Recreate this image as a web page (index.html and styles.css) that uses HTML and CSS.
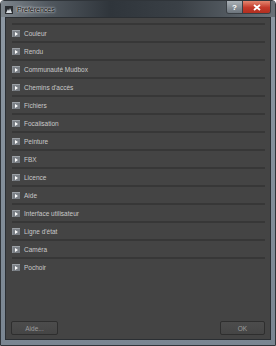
FILE: index.html
```html
<!DOCTYPE html>
<html lang="fr">
<head>
  <meta charset="UTF-8" />
  <title>Préférences</title>
  <link rel="stylesheet" href="styles.css">
</head>
<body>
  <div class="window">
    <div class="titlebar">
      <svg class="app-icon" width="8" height="8" viewBox="0 0 8 8">
        <rect x="0" y="0" width="8" height="8" fill="#2a2d31" />
        <path d="M1 7 L3 3 L4 5 L5 2 L7 7 Z" fill="#d8dde2" />
      </svg>
      <span class="title">Préférences</span>
      <div class="caption-buttons">
        <div class="cap-btn help">?</div>
        <div class="cap-btn close">
          <svg width="8" height="7" viewBox="0 0 8 7">
            <path d="M1 1 L7 6 M7 1 L1 6" stroke="#fff" stroke-width="1.8" />
          </svg>
        </div>
      </div>
    </div>

    <div class="content">
      <div class="sections">
        <div class="section"><span class="toggle"></span>Couleur</div>
        <div class="section"><span class="toggle"></span>Rendu</div>
        <div class="section"><span class="toggle"></span>Communauté Mudbox</div>
        <div class="section"><span class="toggle"></span>Chemins d'accès</div>
        <div class="section"><span class="toggle"></span>Fichiers</div>
        <div class="section"><span class="toggle"></span>Focalisation</div>
        <div class="section"><span class="toggle"></span>Peinture</div>
        <div class="section"><span class="toggle"></span>FBX</div>
        <div class="section"><span class="toggle"></span>Licence</div>
        <div class="section"><span class="toggle"></span>Aide</div>
        <div class="section"><span class="toggle"></span>Interface utilisateur</div>
        <div class="section"><span class="toggle"></span>Ligne d'état</div>
        <div class="section"><span class="toggle"></span>Caméra</div>
        <div class="section last"><span class="toggle"></span>Pochoir</div>
      </div>

      <div class="footer">
        <button type="button" class="btn help-btn">Aide...</button>
        <button type="button" class="btn ok-btn">OK</button>
      </div>
    </div>
  </div>
</body>
</html>
```

FILE: styles.css
```css
html, body {
  margin: 0;
  padding: 0;
  background-color: #ffffff;
  font-family: 'Liberation Sans', Arial, sans-serif;
}

.window {
  width: 276px;
  height: 346px;
  box-sizing: border-box;
  border: 1px solid #30353a;
  border-radius: 4px 4px 0 0;
  background: linear-gradient(to bottom, #8d98a3, #7a8692);
  display: flex;
  flex-direction: column;
  padding: 0 4px 5px 4px;
}

.titlebar {
  height: 16px;
  flex-shrink: 0;
  display: flex;
  align-items: center;
  margin: 0 -4px;
  padding: 0 4px;
  background: linear-gradient(to right, #7d858c 0%, #50575e 18%, #2f353b 40%, #3a4046 65%, #697178 100%);
}

.app-icon {
  margin-left: 0;
  margin-right: 4px;
  margin-top: 1px;
}

.title {
  font-size: 7px;
  color: #111;
  text-shadow: 0 0 3px rgba(255, 255, 255, 0.9), 0 0 2px rgba(255, 255, 255, 0.7);
  margin-top: 1px;
}

.caption-buttons {
  margin-left: auto;
  align-self: flex-start;
  display: flex;
  height: 12px;
  border: 1px solid #3a3f44;
  border-top: none;
  border-radius: 0 0 3px 3px;
  overflow: hidden;
  margin-right: 0;
}

.cap-btn {
  height: 12px;
  display: flex;
  align-items: center;
  justify-content: center;
  color: #fff;
  font-size: 8px;
  font-weight: bold;
}

.help {
  width: 15px;
  background: linear-gradient(to bottom, #a9b0b6, #6c747c);
  border-right: 1px solid #3a3f44;
}

.close {
  width: 27px;
  background: linear-gradient(to bottom, #e4866f, #c4392a 55%, #b12f20);
}

.content {
  flex: 1;
  background-color: #444444;
  border: 1px solid #2b2f33;
  display: flex;
  flex-direction: column;
  padding: 5px 5px 4px 6px;
}

.sections {
  flex: 1;
}

.section {
  height: 16px;
  border-top: 2px solid #373737;
  display: flex;
  align-items: center;
  font-size: 6.5px;
  color: #c9c9c9;
}

.toggle {
  width: 8px;
  height: 7px;
  box-sizing: border-box;
  background-color: #7a7f85;
  border-top: 1px solid #9ca1a6;
  border-left: 1px solid #8d9298;
  margin-right: 4px;
  position: relative;
}

.toggle::after {
  content: "";
  position: absolute;
  left: 2px;
  top: 1px;
  border-left: 3px solid #ffffff;
  border-top: 2px solid transparent;
  border-bottom: 2px solid transparent;
}

.footer {
  display: flex;
  justify-content: space-between;
  padding: 0 0 0 0;
}

.btn {
  height: 14px;
  width: 47px;
  padding: 0;
  background: linear-gradient(to bottom, #4c4c4c, #454545);
  border: 1px solid #2e2e2e;
  border-radius: 2px;
  color: #9c9c9c;
  font-family: 'Liberation Sans', Arial, sans-serif;
  font-size: 6.5px;
  cursor: pointer;
}

.help-btn {
  margin-left: -1px;
}

.ok-btn {
  width: 45px;
}
```
